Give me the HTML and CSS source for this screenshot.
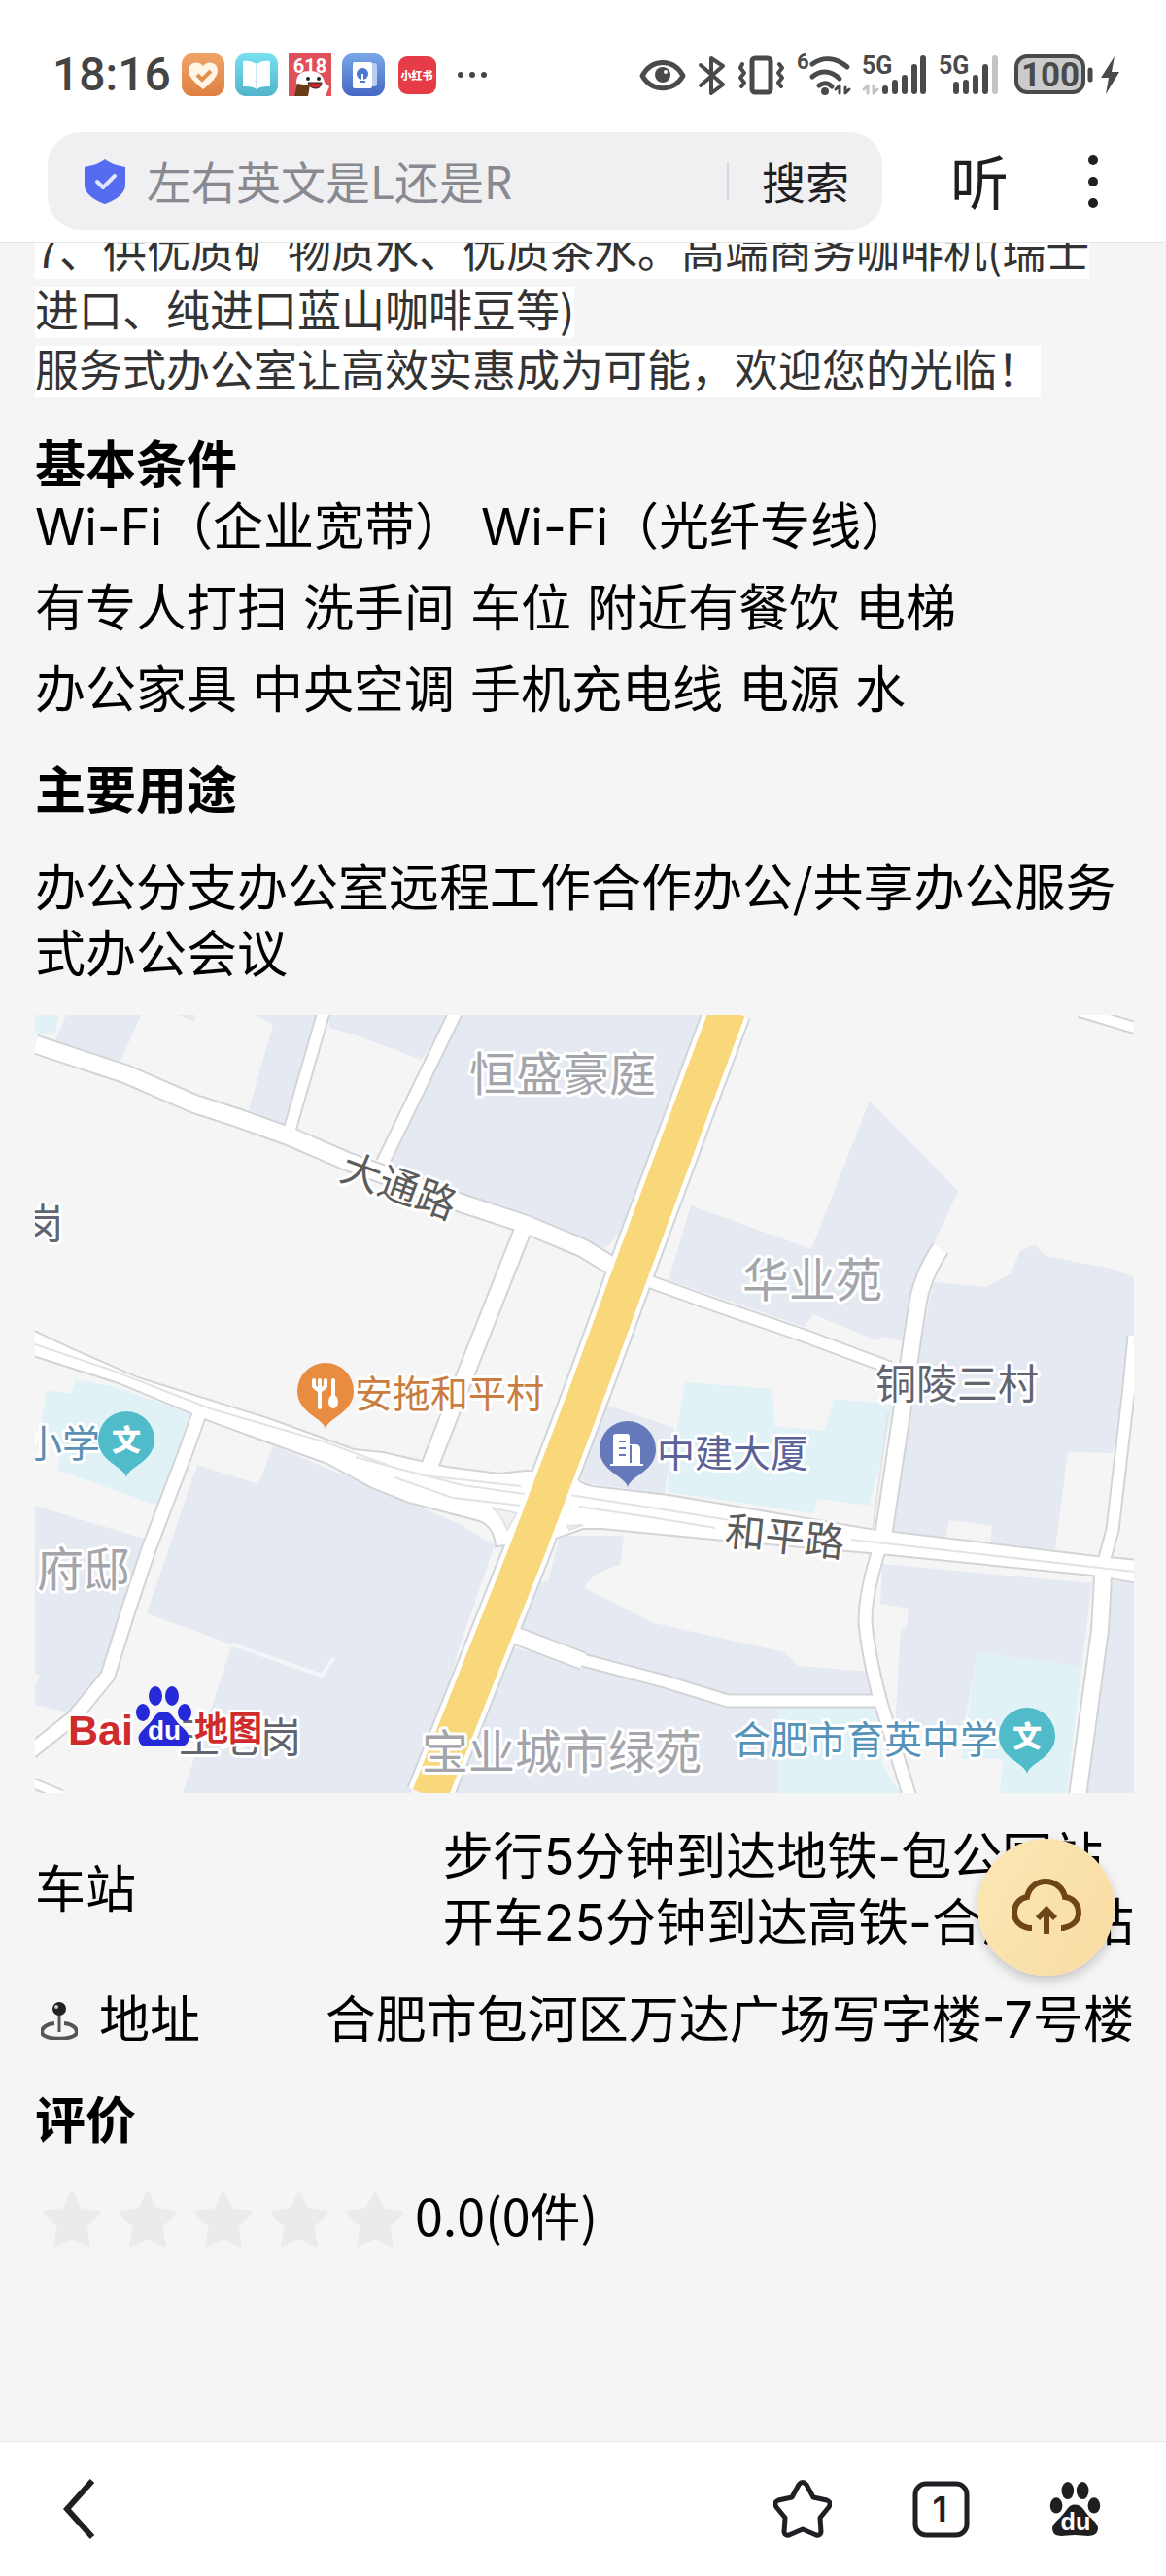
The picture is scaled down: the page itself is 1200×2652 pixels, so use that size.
FILE: index.html
```html
<!DOCTYPE html>
<html lang="zh-CN">
<head>
<meta charset="utf-8">
<meta name="viewport" content="width=device-width, initial-scale=1">
<title>服务式办公室</title>
<link rel="stylesheet" href="styles.css">
</head>
<body>
<header class="top">
  <div class="status">
    <div class="status-left">
      <span class="time">18:16</span>
      <svg class="app" viewBox="0 0 44 44"><defs><linearGradient id="o" x2="0" y2="1"><stop stop-color="#f0a468"/><stop offset="1" stop-color="#df7f42"/></linearGradient></defs><rect width="44" height="44" rx="11" fill="url(#o)"/><path d="M22 37C12 29 7 23 7 18c0-9 10-11 15-5 5-6 15-4 15 5 0 5-5 11-15 19Z" fill="#fff5e6"/><path d="m16 22 5 5 9-9" fill="none" stroke="#e0904f" stroke-width="4"/></svg>
      <svg class="app" viewBox="0 0 44 44"><defs><linearGradient id="c" x2="0" y2="1"><stop stop-color="#78e0f0"/><stop offset="1" stop-color="#52b4cc"/></linearGradient></defs><rect width="44" height="44" rx="11" fill="url(#c)"/><path d="M8 8c5-1 10 0 14 3 4-3 9-4 14-3v26c-5 0-10 0-14 3-4-3-9-3-14-3Z" fill="#fff"/><path d="M22 11v26" stroke="#cdeaf2" stroke-width="2"/></svg>
      <svg class="app" viewBox="0 0 44 44"><rect width="44" height="44" fill="#e0505a"/><path d="M8 30c0-9 6-12 14-12s14 4 15 12l5 4-4 10H6l4-7Z" fill="#fff"/><text x="22" y="20" class="promo" text-anchor="middle">618</text><circle cx="20" cy="26" r="2" fill="#222"/><circle cx="31" cy="26" r="2" fill="#222"/><path d="M20 30h14c0 8-12 8-14 0Z" fill="#c8242c" stroke="#222"/><path d="m9 31 13 2-2 11H6Z" fill="#683d16"/></svg>
      <svg class="app" viewBox="0 0 44 44"><defs><linearGradient id="b" x2="0" y2="1"><stop stop-color="#79a8e6"/><stop offset="1" stop-color="#4467c4"/></linearGradient></defs><rect width="44" height="44" rx="11" fill="url(#b)"/><rect x="18" y="10" width="18" height="24" rx="3" fill="#b9cdf2"/><rect x="11" y="9" width="20" height="27" rx="2" fill="#fff"/><circle cx="21" cy="21" r="6" fill="#4b77cc"/><path d="M21 21v7m-3 1h6" stroke="#fff" stroke-width="2"/><path d="M18 29h6" stroke="#4b77cc" stroke-width="2"/></svg>
      <svg class="app" viewBox="0 0 44 44"><rect x="3" y="3" width="39" height="39" rx="9" fill="#e63c47"/><text x="22" y="27" class="xhs" text-anchor="middle">小红书</text></svg>
      <svg class="more" viewBox="0 0 32 8" width="32" height="8" fill="#444"><circle cx="4" cy="4" r="3"/><circle cx="16" cy="4" r="3"/><circle cx="28" cy="4" r="3"/></svg>
    </div>
    <svg class="signals" viewBox="658 55 494 44" fill="none" stroke="#4a4a4a" stroke-width="5" stroke-linecap="round" stroke-linejoin="round">
      <path d="M661 78c10-18 32-18 42 0-10 17-32 17-42 0Z"/><circle cx="682" cy="77" r="8" fill="#4a4a4a" stroke="none"/><circle cx="685" cy="74" r="2" fill="#fff" stroke="none"/>
      <path d="m721 67 23 20-12 9V60l12 8-23 20" stroke-width="4"/>
      <rect x="774" y="60" width="19" height="35" rx="3"/><path d="m764 66-2 4 4 5-4 5 4 5-3 4m39-23 3 4-4 5 4 5-4 5 3 4" stroke-width="4"/>
      <path d="M836 66c11-8 24-7 36 3M836 79c8-7 19-7 28 2M843 88q7-5 13 1" stroke-width="5"/><circle cx="849" cy="94" r="4" fill="#4a4a4a" stroke="none"/><path d="m860 92 4-4v8m6-6v6l4-4" stroke-width="3"/>
      <path d="m889 92 4-4v8m6-8v8l4-4" stroke="#c4c4c4" stroke-width="3"/>
      <path d="M911 94v-3m10 3V85m10 9V80m10 14V69m9 25V60M984 94v-7m10 7v-9m10 9V80m10 14V69" stroke-width="6"/><path d="M1024 94V60" stroke="#c4c4c4" stroke-width="6"/>
      <rect x="1046" y="58" width="69" height="37" rx="11" fill="#cbcbcb" stroke-width="4"/><path d="M1122 72v10" stroke-width="5"/>
      <path d="m1147 58-14 22h8l-3 17 14-23h-8Z" fill="#4a4a4a" stroke="none"/>
      <g fill="#4a4a4a" stroke="none" class="sig"><text x="820" y="71" font-size="22">6</text><text x="887" y="76" font-size="25">5G</text><text x="966" y="76" font-size="25">5G</text><text x="1081" y="89" font-size="35" text-anchor="middle">100</text></g>
    </svg>
  </div>
  <div class="bar">
    <form class="search">
      <svg viewBox="0 0 42 46" width="42" height="46"><path d="M21 0c7 5 12 6 21 8v18c0 11-13 17-21 20C13 43 0 37 0 26V8c9-2 14-3 21-8Z" fill="#566cf0"/><path d="m13 23 6 6 12-12" fill="none" stroke="#dfe6ff" stroke-width="4" stroke-linecap="round" stroke-linejoin="round"/></svg>
      <input type="search" aria-label="搜索内容" placeholder="左右英文是L还是R">
      <button type="button" class="go">搜索</button>
    </form>
    <button type="button" class="listen">听</button>
    <button type="button" class="kebab" aria-label="更多"><svg viewBox="0 0 20 56" width="20" height="56" fill="#1f1f22"><circle cx="10" cy="6" r="5"/><circle cx="10" cy="28" r="5"/><circle cx="10" cy="50" r="5"/></svg></button>
  </div>
</header>

<main class="page">
  <section class="intro">
    <span>7、供优质矿 物质水、优质茶水。高端商务咖啡机(瑞士</span>
    <span>进口、纯进口蓝山咖啡豆等)</span>
    <span>服务式办公室让高效实惠成为可能，欢迎您的光临！</span>
  </section>

  <section>
    <h2>基本条件</h2>
    <div class="rows">
      <ul class="tags"><li>Wi-Fi（企业宽带）</li><li>Wi-Fi（光纤专线）</li></ul>
      <ul class="tags"><li>有专人打扫</li><li>洗手间</li><li>车位</li><li>附近有餐饮</li><li>电梯</li></ul>
      <ul class="tags"><li>办公家具</li><li>中央空调</li><li>手机充电线</li><li>电源</li><li>水</li></ul>
    </div>
  </section>

  <h2>主要用途</h2>
  <p>办公分支办公室远程工作合作办公/共享办公服务式办公会议</p>

  <svg class="map" viewBox="0 0 1131 801" role="img" aria-label="地图">
    <defs>
      <path id="pin" d="M0 68C-3 56-29 52-29 29A29 29 0 0 1 29 29C29 52 3 56 0 68Z"/>
      <g id="paw"><ellipse cx="7" cy="27" rx="7" ry="9"/><ellipse cx="20" cy="10" rx="7" ry="10"/><ellipse cx="37" cy="10" rx="7" ry="10"/><ellipse cx="50" cy="27" rx="7" ry="9"/><path d="M28 26c9 0 11 8 17 14 7 6 11 10 9 16-3 9-14 5-26 5S5 65 3 56c-2-6 3-10 9-16 6-5 8-14 16-14Z"/></g>
      <g id="roads">
        <path d="M0 30 94 61 163 91 209 106 262 125 320 150 437 193 504 215 564 240 600 262" stroke-width="17"/>
        <path d="M620 270 698 298 794 331 880 363" stroke-width="11"/>
        <path d="M297-3 261 122" stroke-width="11"/><path d="M433-3 358 152" stroke-width="12"/>
        <path d="M504 216 442 373 404 470" stroke-width="16"/><path d="M1075-4 1135 14" stroke-width="10"/>
        <path d="M171 405 155 450 117 550 96 613 75 680 40 723-4 758" stroke-width="13"/>
        <path d="M490 637 564 665" stroke-width="16"/><path d="M560 663 648 686 713 706H868" stroke-width="11"/>
        <path d="M932 240Q912 270 908 300L903 333 893 403 872 543" stroke-width="16"/><path d="M872 540Q852 600 855 630T870 706L900 804" stroke-width="12"/>
        <path d="M1131 330 1126 383 1109 530 1100 563" stroke-width="11"/><path d="M1100 560 1096 633 1073 804" stroke-width="16"/>
        <path d="M-4 790 27 803" stroke-width="8"/>
      </g>
      <path id="main-road" d="M-5 324 35 343 106 374 240 416 328 448 358 451 423 466 477 473 505 470 550 470Q560 484 574 486L652 495 729 508 859 530 1092 558 1136 562V584L1088 576 859 553 709 540 583 528H564L530 540 475 546Q473 526 458 520L385 501 347 486 301 461 182 418 86 378-5 349Z"/>
      <path id="avenue" d="M713-5 610 273 570 383 507 550 406 804"/>
    </defs>
    <rect width="1131" height="801" fill="#f5f5f5"/>
    <g fill="#e5e9f1">
      <path d="M32 0h77L88 48 21 26ZM147 0h18v7ZM226 0h65L255 113 220 98 245 10ZM303 0H425L398 46 331 21 303 13ZM438 0H690L602 225 587 240 366 155Z"/>
      <path d="M675 196 799 241 859 88 950 181 926 233 895 336 874 331 866 335 801 308 792 321 652 273Z"/>
      <path d="M925 275 979 280 1004 266 1014 243 1029 236 1040 248 1107 261 1131 270V350L1109 451 1063 450 1050 550 983 546 985 526 941 520 937 538 882 531 905 360Z"/>
      <path d="M584 400 658 425 648 493 568 482 552 470ZM167 463 230 483 245 443 347 486 435 523 473 546 435 656 423 700 387 801H152L203 648 115 616Z"/>
      <path d="M0 505 115 540 94 613 75 676 33 718 0 710V690L5 680 0 678Z"/>
      <path d="M540 536H606L602 566Q570 575 566 590L637 626 771 656 786 670 859 676 866 703H713L564 662 496 628 519 583H528ZM488 650 572 672 713 712H765V801H432Z"/>
      <path d="M872 565 1088 585 1077 671 970 656 956 733H885L891 633 897 630 899 611 870 606ZM1107 583h24V801H1081Z"/>
    </g>
    <g fill="#e1f2f7">
      <path d="M0 0H25L20 20H0ZM42 375 83 383 159 410 129 506 23 468 28 440 5 430 12 386 37 390ZM669 378 759 385 761 423 813 428 822 395 884 401 859 505 805 498 801 513 650 491ZM765 712H865L872 770 883 791 895 801H765ZM970 656 1077 671 1062 801H993L996 766H953Z"/>
    </g>
    <path d="M203 648 295 680 308 661" fill="none" stroke="#f3f5f7" stroke-width="4"/>
    <g stroke="#d3d4d7" stroke-width="4" fill="none"><use href="#main-road"/></g>
    <g class="casing" fill="none" stroke="#d3d4d7">
      <path d="M0 30 94 61 163 91 209 106 262 125 320 150 437 193 504 215 564 240 600 262" stroke-width="21"/>
      <path d="M620 270 698 298 794 331 880 363" stroke-width="15"/>
      <path d="M297-3 261 122" stroke-width="15"/><path d="M433-3 358 152" stroke-width="16"/>
      <path d="M504 216 442 373 404 470" stroke-width="20"/><path d="M1075-4 1135 14" stroke-width="14"/>
      <path d="M171 405 155 450 117 550 96 613 75 680 40 723-4 758" stroke-width="17"/>
      <path d="M490 637 564 665" stroke-width="20"/><path d="M560 663 648 686 713 706H868" stroke-width="15"/>
      <path d="M932 240Q912 270 908 300L903 333 893 403 872 543" stroke-width="20"/><path d="M872 540Q852 600 855 630T870 706L900 804" stroke-width="16"/>
      <path d="M1131 330 1126 383 1109 530 1100 563" stroke-width="15"/><path d="M1100 560 1096 633 1073 804" stroke-width="20"/>
      <path d="M-4 790 27 803" stroke-width="12"/>
      <use href="#avenue" stroke-width="50"/>
    </g>
    <use href="#main-road" fill="#fff"/>
    <use href="#roads" fill="none" stroke="#fff"/>
    <g fill="none" stroke="#e2e3e6" stroke-width="2"><path d="M0 339 80 366 180 405 300 440 370 466 440 484 510 494M330 455 400 474 500 485M370 476 430 497 500 505M550 494 640 508 715 520M840 540 1131 573M560 506 640 518 700 528M878 410 862 530"/><path d="M470 507 496 513 486 530Q480 514 470 507ZM550 530l14-5-16 1Z" fill="#f0f1f3"/></g>
    <use href="#avenue" fill="none" stroke="#fff" stroke-width="46"/>
    <use href="#avenue" fill="none" stroke="#f9d77b" stroke-width="37"/>
    <g class="label area"><text x="447" y="78">恒盛豪庭</text><text x="728" y="290">华业苑</text><text x="2" y="588">府邸</text><text x="398" y="776">宝业城市绿苑</text></g>
    <g class="label place"><text x="-13" y="230">岗</text><text x="865" y="395">铜陵三村</text><text x="148" y="759">王老岗</text></g>
    <g class="label road" text-anchor="middle"><text transform="translate(375 175) rotate(20)" y="16">大通路</text><text transform="translate(772 536) rotate(6)" y="16">和平路</text></g>
    <g class="label poi"><text x="329" y="404" fill="#c97d40">安拖和平村</text><text x="-11" y="455" fill="#5b8fb3">小学</text><text x="640" y="465" fill="#5a6298">中建大厦</text><text x="718" y="760" fill="#5593b8">合肥市育英中学</text></g>
    <use href="#pin" x="299" y="358" fill="#e88c42"/><g fill="none" stroke="#fff" stroke-width="4" stroke-linecap="round"><path d="M287 376v6q6 8 12 0v-6M293 376v28"/><path d="M307 376v22"/></g><ellipse cx="307" cy="398" rx="5" ry="7" fill="#fff"/>
    <use href="#pin" x="94" y="408" fill="#51bcc9"/><use href="#pin" x="1021" y="713" fill="#51bcc9"/>
    <use href="#pin" x="610" y="418" fill="#6578b9"/><path d="M595 462V434q0-3 3-3h11q3 0 3 3v8h6q5 0 5 5v15h3v2h-34v-2Z" fill="#fff"/><path d="M601 439h7m-7 7h7m-7 7h7m5-10v18" stroke="#6578b9" stroke-width="2"/>
    <g class="wen" text-anchor="middle"><text x="94" y="448">文</text><text x="1021" y="753">文</text></g>
    <g class="baidu"><text x="34" y="751" class="halo">Bai</text><text x="164" y="747" class="tu halo">地图</text><use href="#paw" x="104" y="691" fill="#2529d8"/><text x="133" y="746" text-anchor="middle" class="du">du</text></g>
  </svg>

  <div class="field"><span>车站</span><span>步行5分钟到达地铁-包公园站<br>开车25分钟到达高铁-合肥南站</span></div>
  <div class="field">
    <span class="addr"><svg viewBox="0 0 38 40" width="38" height="40"><path d="M14 23C5 24 1 28 1 32c0 9 36 9 36 0 0-4-4-8-13-9" fill="none" stroke="#555" stroke-width="4"/><path d="M19 8v24" stroke="#555" stroke-width="3"/><circle cx="19" cy="8" r="7" fill="#222"/><circle cx="16" cy="6" r="2" fill="#ccc"/></svg>地址</span>
    <span>合肥市包河区万达广场写字楼-7号楼</span>
  </div>

  <h2>评价</h2>
  <div class="rating">
    <svg viewBox="0 0 370 58" width="370" height="58" role="img" aria-label="0 分">
      <defs><path id="star" d="M29 3 37 19 56 22 42 37 46 55 29 47 12 55 16 37 2 22 21 19Z" fill="#ebebeb" stroke="#ebebeb" stroke-width="4" stroke-linejoin="round"/></defs>
      <use href="#star"/><use href="#star" x="78"/><use href="#star" x="156"/><use href="#star" x="234"/><use href="#star" x="312"/>
    </svg>
    <span>0.0(0件)</span>
  </div>
</main>

<button type="button" class="upload" aria-label="上传"><svg viewBox="0 0 72 60" width="72" height="60" fill="none" stroke="#6e4517" stroke-width="6"><path d="M21 51h-3C8 49 3 43 3 35c0-9 6-15 13-16C18 9 26 3 35 3s18 6 20 16c8 1 14 7 14 16 0 8-6 14-16 16h-2M36 57V34M27 41l9-9 9 9"/></svg></button>

<nav class="bottom">
  <button type="button" aria-label="返回"><svg viewBox="0 0 34 64" width="34" height="64"><path d="M30 3 4 32 30 61" fill="none" stroke="#1f1f24" stroke-width="6"/></svg></button>
  <div class="tools">
    <button type="button" aria-label="收藏"><svg viewBox="0 0 60 60" width="60" height="60"><path d="M26 5q4-5 8 0l7 13 14 3q5 2 2 7L48 39l1 15q-1 4-5 3L30 51 16 57q-4 1-5-3l1-15L3 28q-3-5 2-7l14-3Z" fill="none" stroke="#1f1f24" stroke-width="5" stroke-linejoin="round"/></svg></button>
    <button type="button" aria-label="标签页"><svg viewBox="0 0 60 60" width="60" height="60"><rect x="4" y="4" width="53" height="53" rx="11" fill="none" stroke="#1f1f24" stroke-width="5"/><text x="29" y="43" class="count" text-anchor="middle">1</text></svg></button>
    <button type="button" aria-label="百度首页"><svg viewBox="0 0 57 62" width="53" height="56"><use href="#paw" fill="#1f1f1f"/><text x="29" y="55" class="du" text-anchor="middle">du</text></svg></button>
  </div>
</nav>
</body>
</html>
```
FILE: styles.css
```css
* { box-sizing: border-box; }

body {
  margin: 0;
  min-height: 100vh;
  display: flex;
  flex-direction: column;
  background: #f5f5f5;
  color: #000;
  font: 52px/68px "Noto Sans CJK SC", sans-serif;
}

button {
  padding: 0;
  border: 0;
  background: none;
  color: inherit;
  font: inherit;
}

svg { display: block; flex: none; }
h2, p, ul { margin: 0; padding: 0; }
h2 { font-size: 52px; font-weight: 700; }

/* Top bar */
.top {
  position: sticky;
  top: 0;
  z-index: 2;
  padding-bottom: 12px;
  background: #fff;
  border-bottom: 1px solid #e6e6e6;
}

.status {
  display: flex;
  justify-content: space-between;
  align-items: center;
  padding: 55px 48px 37px 54px;
}

.status-left { display: flex; align-items: center; gap: 11px; }
.time { font: 500 48px/44px Roboto, sans-serif; color: #444; }
.app { width: 44px; height: 44px; }
.more { margin-left: 8px; }
.promo { font: 700 20px Roboto, sans-serif; fill: #fff; }
.xhs { font: 900 11px "Noto Sans CJK SC", sans-serif; fill: #fff; }
.signals { width: 494px; height: 44px; overflow: visible; }
.sig { font-family: Roboto, sans-serif; font-weight: 700; }

.bar { display: flex; align-items: center; padding: 0 65px 0 49px; }

.search {
  flex: 1;
  min-width: 0;
  height: 101px;
  display: flex;
  align-items: center;
  padding: 0 34px 0 38px;
  border-radius: 34px;
  background: #f0f0f3;
}

.search input {
  flex: 1;
  min-width: 0;
  height: 68px;
  margin-left: 22px;
  padding: 0 0 4px;
  border: 0;
  outline: 0;
  background: none;
  font: 46px/64px "Noto Sans CJK SC", sans-serif;
}

.search input::placeholder { color: #898a91; opacity: 1; }

.go {
  padding-left: 34px;
  font-size: 45px;
  line-height: 40px;
  border-left: 2px solid #d8d8dc;
  color: #1f1f24;
}

.listen { margin-left: 70px; padding-bottom: 4px; font-size: 60px; line-height: 64px; color: #1f1f22; }
.kebab { margin-left: 77px; }

/* Content */
.page {
  flex: 1;
  display: flex;
  flex-direction: column;
  gap: 32px;
  margin-top: -16px;
  padding: 0 33px 32px 36px;
}

.intro {
  display: flex;
  flex-direction: column;
  align-items: flex-start;
  gap: 8px;
  font-size: 45px;
  line-height: 45px;
  color: #333;
}

.intro span { padding-bottom: 8px; background: #fff; }
.rows { display: flex; flex-direction: column; gap: 16px; }
.tags { display: flex; flex-wrap: wrap; gap: 0 16px; list-style: none; }
.tags, .field { font-family: Inter, "Noto Sans CJK SC", sans-serif; }

/* Map */
.map { width: 100%; height: auto; font-family: "Noto Sans CJK SC", sans-serif; }
.label, .halo { paint-order: stroke; stroke: #fff; stroke-width: 6px; stroke-linejoin: round; }
.area { font-size: 48px; fill: #a4a5ab; }
.place { font-size: 42px; fill: #62656f; }
.road { font-size: 41px; fill: #5c5c5c; }
.poi { font-size: 39px; }
.wen { font-size: 30px; font-weight: 900; fill: #fff; }
.baidu { font: 700 43px "Liberation Sans", sans-serif; fill: #cf2b2d; }
.tu { font: 700 35px "Noto Sans CJK SC", sans-serif; }
.du { font: 700 28px "Liberation Sans", sans-serif; fill: #fff; }

/* Station and address */
.field {
  display: flex;
  justify-content: space-between;
  align-items: center;
}

.addr { display: flex; align-items: center; gap: 22px; padding-left: 6px; }

.rating { display: flex; align-items: flex-end; gap: 12px; padding-left: 9px; }

/* Floating upload button */
.upload {
  position: fixed;
  right: 53px;
  bottom: 618px;
  z-index: 1;
  width: 141px;
  height: 141px;
  display: flex;
  align-items: center;
  justify-content: center;
  border-radius: 50%;
  background: linear-gradient(120deg, #fbe7b4, #f8dca2);
  box-shadow: 0 5px 12px #0003;
}

/* Bottom navigation */
.bottom {
  position: sticky;
  bottom: 0;
  display: flex;
  justify-content: space-between;
  align-items: center;
  height: 139px;
  padding: 0 67px 0 65px;
  border-top: 1px solid #e8e8e8;
  background: #fff;
}

.tools { display: flex; align-items: center; gap: 82px; }
.count { font: 600 36px Inter, sans-serif; fill: #1f1f24; }
```
